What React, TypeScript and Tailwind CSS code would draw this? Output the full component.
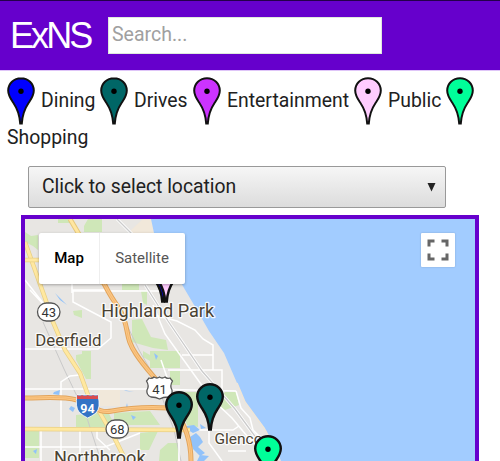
const pinPath =
  'M14 1.200C6.900 1.200 1.200 6.600 1.200 13.600c0 5.400 2.600 8.600 5.400 12.600C10.300 31.600 12.600 37.500 13.200 46.500h1.600c.6-9 2.900-14.900 6.600-20.300 2.800-4 5.400-7.200 5.400-12.600C26.800 6.600 21.100 1.200 14 1.200z';

function Pin({ color, bold = false }: { color: string; bold?: boolean }) {
  return (
    <svg width="28" height="48" viewBox="0 0 28 48" className="block shrink-0">
      <path d={pinPath} fill={color} stroke="#111" strokeWidth={bold ? 2.4 : 2} />
      <circle cx="14" cy="14.200" r="2.700" fill="#000" />
    </svg>
  );
}

const legend = [
  { label: 'Dining', color: '#0000ff', width: 'w-[93px]' },
  { label: 'Drives', color: '#006666', width: 'w-[93px]' },
  { label: 'Entertainment', color: '#cc33ff', width: 'w-[161px]' },
  { label: 'Public', color: '#ffccff', width: 'w-[92px]' },
];

const whiteRoads = [
  'M25 349H98L111 338V322L73 302V290H110',
  'M25 389H150L236 391',
  'M25 280L47 308L52 312M30 290L45 306',
  'M61 428V382L70 376L80 375',
  'M80 428V461M41 428V461M61 428V461M25 447H105L140 433M97 428V438L110 450',
  'M153 305L165 334L203 387',
  'M158 316L177 321L195 330L203 339L213 345V370',
  'M182 355H213M168 370H222V390',
  'M203 387L215 402L232 418L247 436L262 452',
  'M236 391L241 408L250 418L253 430L268 445',
  'M179 436V461M209 431V443L222 461M198 430H233L239 426M228 451H246',
  'M72 283V293M73 291H160',
  'M161 360L175 400L179 436',
];
const greens = [
  'M88 219H102V232H84V226zM58 219H70V223H58zM25 232L31 236L38 235V250L33 246L25 242zM59 235H73V241L62 240z',
  'M122 282H139V290H122zM141 291L147 291V305L143 303z',
  'M73 311L82 310V318L74 315zM82 351H91V379H86L76 360V355L82 354z',
  'M132 320L142 319L151 337L166 340L168 350L153 348L132 342z',
  'M150 351H180V368H150zM170 371H180V385H170zM143 351L150 355V361L143 357z',
  'M76 415L108 412L116 427H76zM25 431H39V458H25zM140 433L158 431L149 450H140z',
  'M114 413L150 411L160 425H114zM180 392H198V427L187 425L180 407zM225 392L236 392L239 405L225 410L216 404z',
  'M168 443L178 443V461H159L160 450z',
];
const waters = [
  'M54 392L60 390L59 395L53 394zM71 406L75 408L73 412L69 409zM124 390L134 392L126 391zM131 415L136 417L133 420zM126 407L127 403L128 408zM33 451L37 449L36 454zM154 353L158 356L156 360zM55 293L67 305L60 300z',
  'M186 426L194 425L200 430L193 433L188 430zM190 437L196 433L200 437L203 442L198 447L205 453L200 456L193 449L191 443zM200 424L206 428L201 429zM200 455L209 456L204 461H197z',
];

const yellowRoads = [
  'M25 242L35 270L45 298L53 322L65 350L80 373L88 395L100 413L115 439L126 461',
  'M25 260H40',
  'M25 429L190 430',
];
const orangeRoads = [
  'M100 276L108 291C115 304 121 309 124 319C129 334 126 339 136 354C149 374 164 385 173 404C181 421 191 434 191 461',
  'M25 398C46 398 62 396 77 400C91 404 98 414 112 411C128 408 151 407 169 408Q178 410 180 420',
];

function Label({ x, y, size, children }: { x: number; y: number; size: number; children: string }) {
  return (
    <text
      x={x}
      y={y}
      fontSize={size}
      fill="#4a4232"
      stroke="#fff"
      strokeWidth="2.500"
      strokeOpacity=".85"
      strokeLinejoin="round"
      paintOrder="stroke"
    >
      {children}
    </text>
  );
}

function MapArt() {
  return (
    <svg
      width="450"
      height="242"
      viewBox="25 219 450 242"
      className="block font-[Roboto,sans-serif]"
      fill="none"
    >
      <path fill="#e8e6e3" d="M25 219H475V461H25z" />
      <path fill="#f1e8da" d="M131 230L143 219H152L155 234H131zM98 390H120V406H100z" />
      {greens.map((d) => (
        <path key={d} d={d} fill="#cfe7b8" />
      ))}
      <path d="M43 322L64 369L86 415L101 461M124 319L139 350L155 378L174 430L181 461" stroke="#c9c9c9" />
      {whiteRoads.map((d) => (
        <path key={d} d={d} stroke="#fff" strokeWidth="1.500" />
      ))}
      <path d="M117 219L136 238M145 285L168 321L202 371L235 409L273 461" stroke="#fff" strokeWidth="3" />
      <path d="M117 219L136 238M145 285L168 321L202 371L235 409L273 461" stroke="#cbcbcb" strokeWidth="1.300" />
      {waters.map((d) => (
        <path key={d} d={d} fill="#91c2fa" />
      ))}
      <path
        fill="#a2ccff"
        d="M151 219L154 233L163 252L173 268L184 288L197 310L209 331L224 353L237 383L245 402L264 428L278 453L281 461H475V219z"
      />
      <path d="M237 383L245 402L264 428L278 453" stroke="#f0e6d7" strokeWidth="1.500" />
      {yellowRoads.map((d) => (
        <g key={d}>
          <path d={d} stroke="#e8cf85" strokeWidth="4.500" />
          <path d={d} stroke="#ffe8a0" strokeWidth="3" />
        </g>
      ))}
      <path d="M70 219L80 236L103 284" stroke="#e6c87b" strokeWidth="5" />
      <path d="M70 219L80 236L103 284" stroke="#ffe6a0" strokeWidth="3" />
      {orangeRoads.map((d) => (
        <g key={d}>
          <path d={d} stroke="#e2a45c" strokeWidth="5" />
          <path d={d} stroke="#fcc783" strokeWidth="3" />
          <path d={d} stroke="#efb26b" strokeWidth=".7" />
        </g>
      ))}

      <g stroke="#555" strokeWidth="1.300" fill="#fff">
        <rect x="37.500" y="303" width="22.500" height="18" rx="9" />
        <rect x="106" y="420" width="22.500" height="18" rx="9" />
        <path d="M149 378Q152 379 154 377Q157 379 159.500 377Q162 379 165 377Q167 379 170 378L172.500 381Q169.500 386 172 390Q173 396 168 397Q163 397 159.500 399Q156 397 151 397Q146 395 147 390Q149.500 386 146.500 381z" />
      </g>
      <g fontSize="13" fill="#333" textAnchor="middle">
        <text x="48.700" y="316.700">43</text>
        <text x="117.300" y="433.700">68</text>
        <text x="159.500" y="393.500">41</text>
      </g>
      <path d="M78 395L98 395Q101 408 96 413Q92 416 87.700 418Q83 416 79 412Q75 407 77 395z" fill="#3373c5" stroke="#fff" strokeWidth=".8" />
      <path d="M77 395Q80 397 82 395Q85 397 87.700 395Q91 397 93 395Q96 397 98 395V399H77z" fill="#d84b50" />
      <text x="87.500" y="412.500" fontSize="12.500" fontWeight="700" fill="#fff" textAnchor="middle">94</text>

      <Label x={101.300} y={317} size={18.100}>Highland Park</Label>
      <Label x={35.300} y={346} size={16.800}>Deerfield</Label>
      <Label x={54} y={464} size={18.100}>Northbrook</Label>
      <Label x={214.500} y={444} size={15.500}>Glencoe</Label>
    </svg>
  );
}

export default function App() {
  return (
    <div className="flex h-[461px] w-[500px] flex-col overflow-hidden bg-white font-[Roboto,sans-serif] text-[#212121]">
      <header className="flex h-[71px] shrink-0 items-start border-t border-b border-t-[#24004b] border-b-[#dfc5f8] bg-[#6600cc] pl-[10px]">
        <h1 className="mt-[9px] w-[98px] font-['Liberation_Sans',sans-serif] text-[36px] leading-[52px] tracking-[-2.900px] text-white">ExNS</h1>
        <input
          placeholder="Search..."
          className="mt-4 h-[37px] w-[274px] border border-[#dfe8dc] bg-white px-[3px] pb-[3px] text-[19.500px] outline-none placeholder:text-[#a0a0a0]"
        />
      </header>

      <section className="flex h-[84px] shrink-0 flex-wrap content-start pt-[6px] pl-[7px] text-[19.400px]">
        {legend.map((item) => (
          <div key={item.label} className={`flex h-[48px] items-start whitespace-nowrap ${item.width}`}>
            <Pin color={item.color} />
            <span className="ml-[6px] pt-[13px] leading-[22px]">{item.label}</span>
          </div>
        ))}
        <Pin color="#00ff99" />
        <div className="w-full pt-[2px] leading-[22px]">Shopping</div>
      </section>

      <main className="flex flex-col pt-[11px]">
        <button className="ml-7 flex h-[42px] w-[418px] items-center justify-between rounded-[2px] border border-[#999] bg-linear-to-b from-[#f6f6f6] to-[#dcdcdc] pr-[9px] pl-[13px] text-[19.350px]">
          <span>Click to select location</span>
          <svg width="9" height="9" viewBox="0 0 9 9">
            <path d="M.5 0H8.500L4.500 8.500z" fill="#222" />
          </svg>
        </button>

        <div className="relative mt-[7px] ml-[21px] h-[250px] w-[458px] overflow-hidden border-4 border-[#6600cc]">
          <MapArt />
          <div className="absolute top-[36px] left-[124px]"><Pin bold color="#0000ff" /></div>
          <div className="absolute top-[36px] left-[126.500px]"><Pin bold color="#ffccff" /></div>
          <div className="absolute top-[172px] left-[140.400px]"><Pin bold color="#006666" /></div>
          <div className="absolute top-[164px] left-[171px]"><Pin bold color="#006666" /></div>
          <div className="absolute top-[215.500px] left-[229.300px]"><Pin bold color="#00ff99" /></div>
          <div className="absolute top-[14px] left-[14px] flex h-[51px] w-[146px] rounded-[2px] bg-white text-[15px] shadow-[0_1px_3px_rgba(0,0,0,0.3)]">
            <button className="w-[61px] border-r border-[#eee] font-medium text-black">Map</button>
            <button className="flex-1 pr-px text-[#565656]">Satellite</button>
          </div>
          <button className="absolute top-[14px] left-[396px] flex size-[34px] items-center justify-center rounded-[1px] bg-white shadow-[0_0_2px_rgba(0,0,0,0.2)]">
            <svg width="22" height="22" viewBox="0 0 22 22" fill="none" stroke="#666" strokeWidth="3">
              <path d="M2 7.500V2H7.500M14.500 2H20V7.500M20 14.500V20H14.500M7.500 20H2V14.500" />
            </svg>
          </button>
        </div>
      </main>
    </div>
  );
}
